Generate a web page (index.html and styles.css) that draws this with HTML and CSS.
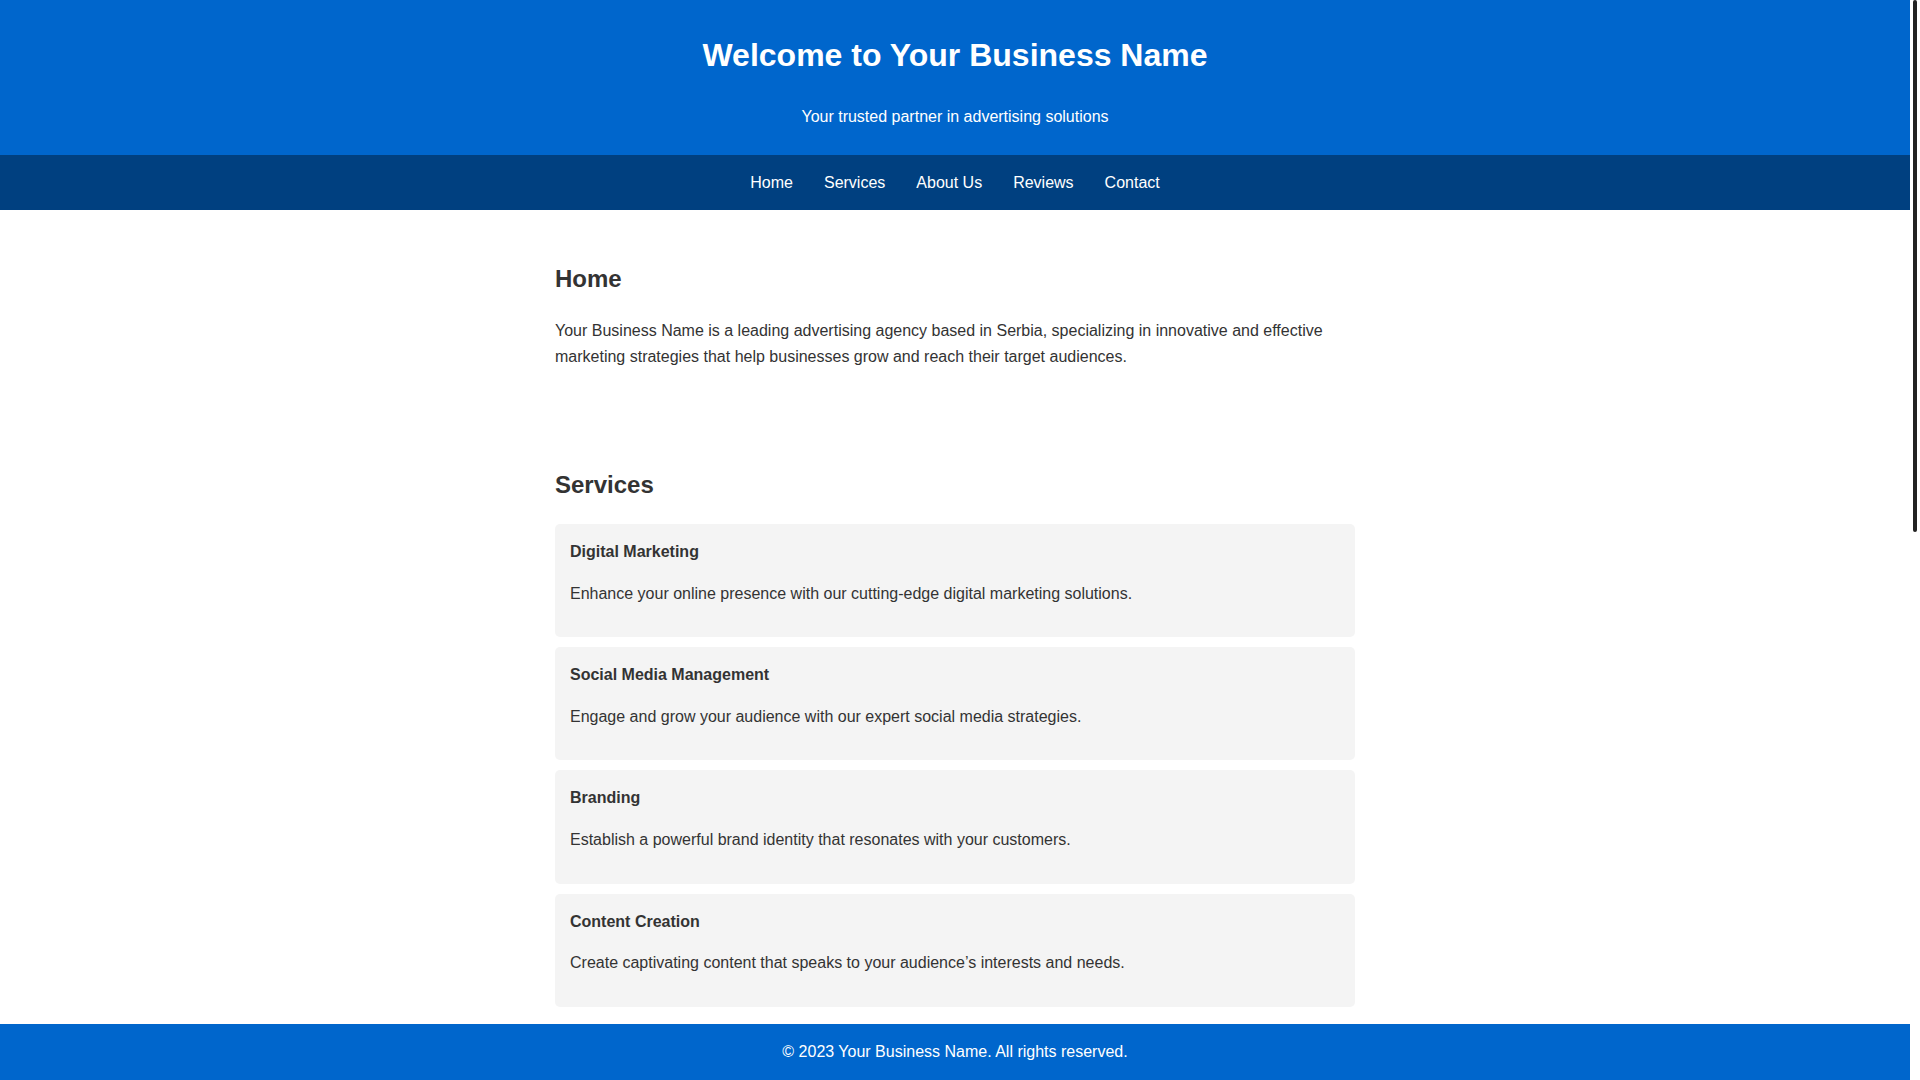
FILE: index.html
```html
<!DOCTYPE html>
<html lang="en">
<head>
<meta charset="utf-8">
<title>Your Business Name</title>
<link rel="stylesheet" href="styles.css">
</head>
<body>
<header class="site-header">
  <h1 class="site-title">Welcome to Your Business Name</h1>
  <p class="site-tagline">Your trusted partner in advertising solutions</p>
</header>
<nav class="site-nav">
  <ul class="nav-list">
    <li><a href="#home">Home</a></li>
    <li><a href="#services">Services</a></li>
    <li><a href="#about">About Us</a></li>
    <li><a href="#reviews">Reviews</a></li>
    <li><a href="#contact">Contact</a></li>
  </ul>
</nav>
<main class="content">
  <section id="home" class="section">
    <h2>Home</h2>
    <p>Your Business Name is a leading advertising agency based in Serbia, specializing in innovative and effective marketing strategies that help businesses grow and reach their target audiences.</p>
  </section>
  <section id="services" class="section">
    <h2>Services</h2>
    <div class="card">
      <h3>Digital Marketing</h3>
      <p>Enhance your online presence with our cutting-edge digital marketing solutions.</p>
    </div>
    <div class="card">
      <h3>Social Media Management</h3>
      <p>Engage and grow your audience with our expert social media strategies.</p>
    </div>
    <div class="card">
      <h3>Branding</h3>
      <p>Establish a powerful brand identity that resonates with your customers.</p>
    </div>
    <div class="card">
      <h3>Content Creation</h3>
      <p>Create captivating content that speaks to your audience’s interests and needs.</p>
    </div>
  </section>
  <section id="about" class="section">
    <h2>About Us</h2>
    <p>Founded with a passion for creativity and results, Your Business Name brings together a team of experienced marketers, designers and strategists dedicated to helping brands stand out in a crowded marketplace.</p>
    <p>We believe in building long-term partnerships with our clients, delivering measurable results through data-driven campaigns and inspiring creative work.</p>
  </section>
  <section id="reviews" class="section">
    <h2>Reviews</h2>
    <div class="card">
      <h3>Marko P.</h3>
      <p>“Working with Your Business Name transformed our online presence. Highly recommended!”</p>
    </div>
    <div class="card">
      <h3>Jelena S.</h3>
      <p>“Their social media team doubled our engagement in just three months.”</p>
    </div>
    <div class="card">
      <h3>Nikola D.</h3>
      <p>“Professional, creative and always on time. A true partner for our brand.”</p>
    </div>
  </section>
  <section id="contact" class="section">
    <h2>Contact</h2>
    <p>Email: info@yourbusinessname.rs</p>
    <p>Phone: +381 11 123 4567</p>
    <p>Address: Knez Mihailova 1, 11000 Belgrade, Serbia</p>
  </section>
</main>
<footer class="site-footer">
  <p>© 2023 Your Business Name. All rights reserved.</p>
</footer>
<div class="scrollbar" aria-hidden="true"><div class="scrollbar-thumb"></div></div>
</body>
</html>
```

FILE: styles.css
```css
html, body {
  margin: 0;
  padding: 0;
}

body {
  font-family: "Liberation Sans", Arial, sans-serif;
  font-size: 16px;
  line-height: 1.6;
  color: #333;
  background: #fff;
  margin-right: 10px;
  padding-bottom: 80px;
}

.site-header {
  background: #0066cc;
  color: #fff;
  text-align: center;
  padding: 8px 0 9.5px;
}

.site-title {
  font-size: 32px;
  margin: 21.5px 0 23.7px;
}

.site-tagline {
  margin: 16px 0;
}

.site-nav {
  background: #004080;
  padding: 14.5px 0;
}

.nav-list {
  list-style: none;
  margin: 0;
  padding: 0;
  display: flex;
  justify-content: center;
  gap: 31px;
}

.nav-list a {
  color: #fff;
  text-decoration: none;
}

.content {
  max-width: 800px;
  margin: 0 auto;
}

.section {
  padding: 30px 0;
}

.section h2 {
  font-size: 24px;
  margin: 20px 0;
}

.section p {
  margin: 16px 0;
}

.card {
  background: #f4f4f4;
  border-radius: 5px;
  padding: 15px;
  margin-bottom: 10px;
}

.card h3 {
  font-size: 16px;
  margin: 0;
}

.card p {
  margin: 16px 0;
}

.site-footer {
  position: fixed;
  left: 0;
  right: 10px;
  bottom: 0;
  background: #0066cc;
  color: #fff;
  text-align: center;
  padding: 15px 0;
}

.site-footer p {
  margin: 0;
}

.scrollbar {
  position: fixed;
  top: 0;
  right: 0;
  bottom: 0;
  width: 10px;
  background: #fff;
}

.scrollbar-thumb {
  margin: 0 3px;
  height: 532px;
  background: #222;
  border-radius: 2px;
}
```
